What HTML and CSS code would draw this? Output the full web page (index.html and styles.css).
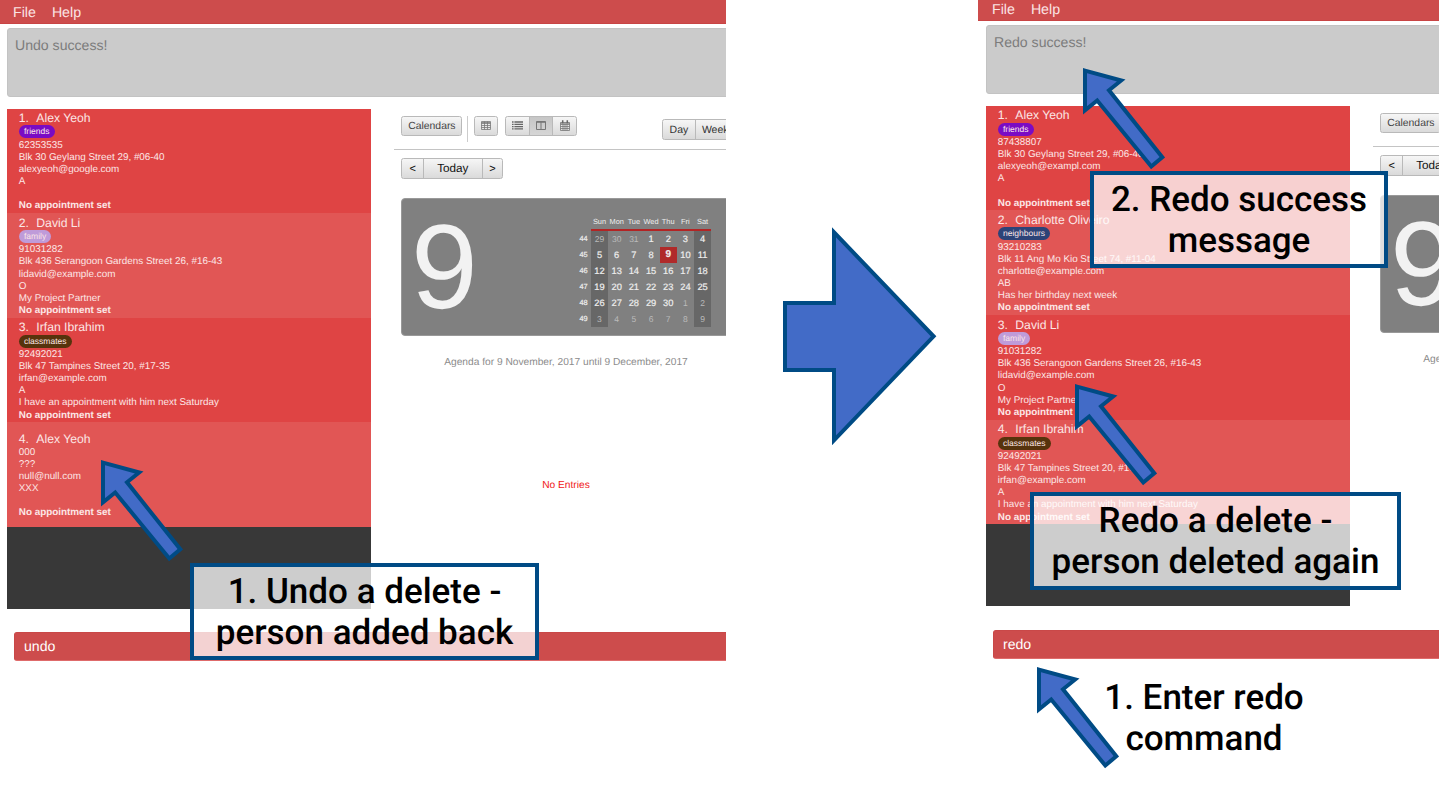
FILE: index.html
```
<!DOCTYPE html>
<html lang="en">
<head>
<meta charset="utf-8">
<title>Undo and redo</title>
<link rel="stylesheet" href="styles.css">
</head>
<body>
<svg class="defs" width="0" height="0" aria-hidden="true">
  <symbol id="pointer" viewBox="0 0 86 104"><path d="M2 2.6 38.2 12.5 26 22.3 79.3 89.3 68.3 98.5 14.2 32.5 2 42.3Z" fill="#426bc7" stroke="#004b85" stroke-width="4" stroke-miterlimit="10"/></symbol>
  <symbol id="i-grid" viewBox="0 0 10 9"><path d="M.5.5h9v8h-9zM.5 2.5h9M.5 4.5h9M.5 6.5h9M3.5.5v8M6.5.5v8M.5 1.5h9" fill="none" stroke="#777" stroke-width=".8"/></symbol>
  <symbol id="i-list" viewBox="0 0 11 9"><path d="M0 1h1.6M2.4 1H11M0 3.3h1.6M2.4 3.3H11M0 5.6h1.6M2.4 5.6H11M0 7.9h1.6M2.4 7.9H11" fill="none" stroke="#666" stroke-width="1.3"/></symbol>
  <symbol id="i-cols" viewBox="0 0 10 9"><path d="M.5.5h9v8h-9zM5 .5v8M.5 1.3h9" fill="none" stroke="#777" stroke-width="1"/></symbol>
  <symbol id="i-cal" viewBox="0 0 10 11"><path d="M.5 2.5h9v8h-9zM.5 4.5h9M.5 6.5h9M.5 8.5h9M3 4v6.500M5 4v6.500M7 4v6.500M.5 3.300h9" fill="none" stroke="#777" stroke-width=".8"/><path d="M2.700.3v3M7.300.3v3" stroke="#666" stroke-width="1.500"/></symbol>
</svg>
<main class="slide">
  <section class="pane pane-undo">
    <nav class="menu"><span>File</span><span>Help</span></nav>
    <div class="app">
      <div class="result">Undo success!</div>
      <div class="body">
        <div class="people">
          <article class="person"><h2><b>1.</b>Alex Yeoh</h2><span class="tag friends">friends</span><p>62353535</p><p>Blk 30 Geylang Street 29, #06-40</p><p>alexyeoh@google.com</p><p>A</p><p></p><p class="appt">No appointment set</p></article>
          <article class="person"><h2><b>2.</b>David Li</h2><span class="tag family">family</span><p>91031282</p><p>Blk 436 Serangoon Gardens Street 26, #16-43</p><p>lidavid@example.com</p><p>O</p><p>My Project Partner</p><p class="appt">No appointment set</p></article>
          <article class="person"><h2><b>3.</b>Irfan Ibrahim</h2><span class="tag classmates">classmates</span><p>92492021</p><p>Blk 47 Tampines Street 20, #17-35</p><p>irfan@example.com</p><p>A</p><p>I have an appointment with him next Saturday</p><p class="appt">No appointment set</p></article>
          <article class="person"><h2><b>4.</b>Alex Yeoh</h2><p>000</p><p>???</p><p>null@null.com</p><p>XXX</p><p></p><p class="appt">No appointment set</p></article>
        </div>
        <div class="calendar">
          <div class="toolbar">
            <span class="btn cals">Calendars</span><i class="sep"></i>
            <span class="btn icon"><svg width="10" height="9"><use href="#i-grid"/></svg></span>
            <div class="group views"><span class="icon"><svg width="11" height="9"><use href="#i-list"/></svg></span><span class="icon on"><svg width="10" height="9"><use href="#i-cols"/></svg></span><span class="icon"><svg width="10" height="11"><use href="#i-cal"/></svg></span></div>
            <div class="group range"><span>Day</span><span>Week</span></div>
          </div>
          <div class="group nav"><span>&lt;</span><span class="today">Today</span><span>&gt;</span></div>
          <div class="date">
            <div class="big">9</div>
            <div class="month">
              <div class="days head"><i></i><span>Sun</span><span>Mon</span><span>Tue</span><span>Wed</span><span>Thu</span><span>Fri</span><span>Sat</span></div>
              <div class="days grid">
                <i>44</i><span class="we out">29</span><span class="out">30</span><span class="out">31</span><span>1</span><span>2</span><span>3</span><span class="we">4</span>
                <i>45</i><span class="we">5</span><span>6</span><span>7</span><span>8</span><span class="now">9</span><span>10</span><span class="we">11</span>
                <i>46</i><span class="we">12</span><span>13</span><span>14</span><span>15</span><span>16</span><span>17</span><span class="we">18</span>
                <i>47</i><span class="we">19</span><span>20</span><span>21</span><span>22</span><span>23</span><span>24</span><span class="we">25</span>
                <i>48</i><span class="we">26</span><span>27</span><span>28</span><span>29</span><span>30</span><span class="out">1</span><span class="we out">2</span>
                <i>49</i><span class="we out">3</span><span class="out">4</span><span class="out">5</span><span class="out">6</span><span class="out">7</span><span class="out">8</span><span class="we out">9</span>
              </div>
            </div>
          </div>
          <p class="agenda">Agenda for 9 November, 2017 until 9 December, 2017</p>
          <p class="none">No Entries</p>
        </div>
      </div>
      <div class="command">undo</div>
    </div>
  </section>
  <svg class="then" width="156" height="220" viewBox="0 0 156 220"><path d="M4 77h49V6.300L152.600 110.300 53 214.300V144H4Z" fill="#426bc7" stroke="#004b85" stroke-width="4"/></svg>
  <section class="pane pane-redo">
    <nav class="menu"><span>File</span><span>Help</span></nav>
    <div class="app">
      <div class="result">Redo success!</div>
      <div class="body">
        <div class="people">
          <article class="person"><h2><b>1.</b>Alex Yeoh</h2><span class="tag friends">friends</span><p>87438807</p><p>Blk 30 Geylang Street 29, #06-40</p><p>alexyeoh@exampl.com</p><p>A</p><p></p><p class="appt">No appointment set</p></article>
          <article class="person"><h2><b>2.</b>Charlotte Oliveiro</h2><span class="tag neighbours">neighbours</span><p>93210283</p><p>Blk 11 Ang Mo Kio Street 74, #11-04</p><p>charlotte@example.com</p><p>AB</p><p>Has her birthday next week</p><p class="appt">No appointment set</p></article>
          <article class="person"><h2><b>3.</b>David Li</h2><span class="tag family">family</span><p>91031282</p><p>Blk 436 Serangoon Gardens Street 26, #16-43</p><p>lidavid@example.com</p><p>O</p><p>My Project Partner</p><p class="appt">No appointment set</p></article>
          <article class="person"><h2><b>4.</b>Irfan Ibrahim</h2><span class="tag classmates">classmates</span><p>92492021</p><p>Blk 47 Tampines Street 20, #17-35</p><p>irfan@example.com</p><p>A</p><p>I have an appointment with him next Saturday</p><p class="appt">No appointment set</p></article>
        </div>
        <div class="calendar">
          <div class="toolbar"><span class="btn cals">Calendars</span></div>
          <div class="group nav"><span>&lt;</span><span class="today">Today</span><span>&gt;</span></div>
          <div class="date"><div class="big">9</div></div>
          <p class="agenda">Agenda for 9 November, 2017 until 9 December, 2017</p>
        </div>
      </div>
      <div class="command">redo</div>
    </div>
  </section>

  <svg class="ptr ptr-undo" width="86" height="104"><use href="#pointer"/></svg>
  <svg class="ptr ptr-message" width="86" height="104"><use href="#pointer"/></svg>
  <svg class="ptr ptr-deleted" width="86" height="104"><use href="#pointer"/></svg>
  <svg class="ptr ptr-command" width="86" height="104"><use href="#pointer"/></svg>
  <div class="note note-undo">1. Undo a delete -<br>person added back</div>
  <div class="note note-message">2. Redo success<br>message</div>
  <div class="note note-deleted">Redo a delete -<br>person deleted again</div>
  <div class="note note-command">1. Enter redo<br>command</div>
</main>
</body>
</html>
```
FILE: styles.css
```
* { box-sizing: border-box; }
body { margin: 0; background: #fff; font-family: "Liberation Sans", Arial, sans-serif; text-rendering: geometricPrecision; }
h2, p { margin: 0; font-weight: normal; }
i { font-style: normal; }
.defs { position: absolute; }
.slide { position: relative; display: flex; width: 1439px; height: 809px; overflow: hidden; }
.pane { flex: none; height: 809px; overflow: hidden; }
.pane-undo { width: 726px; }
.pane-redo { width: 461px; margin-left: 41px; }
.then { flex: none; margin: 226px 0 0 55px; }

.menu { display: flex; gap: 16px; height: 24px; padding: 0 13px; background: #cd4c4c; border-bottom: 1px solid #c84444; color: #fbe3e3; font-size: 14.200px; line-height: 26px; }
.pane-redo .menu { height: 21.400px; padding-left: 14px; line-height: 21px; }
.app { width: 820px; padding: 4px 0 0 7px; }
.pane-redo .app { padding-left: 8px; }
.result { height: 68.500px; padding: 8px 7px; background: #cbcbcb; border: 1px solid #c3c3c3; border-radius: 3px; color: #7c7c7c; font-size: 14.100px; line-height: 16px; }
.body { display: flex; margin-top: 12px; height: 500px; }
.people { flex: none; width: 364px; background: #383838; }
.person { display: flex; flex-direction: column; align-items: flex-start; justify-content: center; height: 104.600px; padding: .8px 0 0 11.800px; background: #df4444; color: #fce6e6; font-size: 9.870px; line-height: 12.150px; }
.person:nth-child(even) { background: #e15655; }
.person h2 { font-size: 12.200px; line-height: 16px; height: 16px; }
.person b { display: inline-block; width: 17.500px; font-weight: normal; }
.person p { height: 12.150px; white-space: nowrap; }
.person .appt { font-weight: bold; }
.tag { height: 13px; margin: -.6px 0 1.300px; padding: 0 5.200px; border-radius: 7px; font-size: 8.500px; line-height: 13.500px; }
.friends { background: #7a0bc4; }
.family { background: #bf9bd9; }
.classmates { background: #56330c; }
.neighbours { background: #2c4378; }

.calendar { flex: none; width: 370px; margin-left: 23px; }
.toolbar { display: flex; height: 41.500px; padding: 7px 0 0 7.400px; border-bottom: 1px solid #c4c4c4; }
.toolbar > * { flex: none; }
.btn, .group { border: 1px solid #b9b9b9; border-radius: 2.500px; background: linear-gradient(#f6f6f6, #dadada); }
.btn { height: 20.500px; }
.cals { width: 61px; font-size: 10.400px; line-height: 20px; text-align: center; color: #444; }
.sep { width: 1px; height: 26px; margin: 0 6px 0 4.500px; background: #ccc; }
.icon { display: flex; align-items: center; justify-content: center; }
.btn.icon { width: 24px; height: 20px; }
.group { display: flex; color: #333; }
.group > span + span { border-left: 1px solid #b9b9b9; }
.views { width: 72px; height: 20px; margin-left: 7px; }
.views .icon { flex: 1; }
.views .on { background: linear-gradient(#c6c6c6, #d6d6d6); }
.range { margin: 3px 0 0 85px; width: 160px; height: 21px; font-size: 10.500px; line-height: 20px; }
.range span { width: 32px; text-align: center; }
.range span + span { width: 42px; text-align: left; padding-left: 6px; }
.nav { width: 102px; height: 21px; margin: 8px 0 0 7.400px; font-size: 11px; line-height: 20px; text-align: center; color: #111; }
.nav span { width: 21px; }
.nav .today { width: 59px; font-size: 11.700px; }
.date { display: flex; justify-content: space-between; width: 362px; height: 138px; margin: 19px 0 0 7.400px; border-radius: 4px; background: #808080; border: 1px solid #999; }
.big { margin: -1px 0 0 8.500px; color: #f2f2f2; font-size: 120px; line-height: 138px; }
.month { width: 135px; margin: 15px 51px 0 0; color: #eee; }
.days { display: grid; grid-template-columns: 14.500px repeat(7, 17.200px); text-align: center; }
.head { height: 17px; font-size: 7.400px; line-height: 15px; background: linear-gradient(#b32424, #b32424) 14.500px 15px / 120.400px 2px no-repeat; }
.grid { grid-auto-rows: 16px; font-size: 9.300px; line-height: 16px; -webkit-text-stroke: .2px; }
.grid i { font-size: 7.400px; text-align: left; padding-left: 3px; }
.grid .we { background: #676767; }
.grid .out { color: #bbb; font-size: 8.500px; -webkit-text-stroke: 0; }
.grid .now { background: #b02a2a; font-weight: bold; font-size: 10px; }
.agenda, .none { width: 344px; text-align: center; font-size: 10.200px; line-height: 12px; }
.agenda { margin-top: 20.500px; color: #8c8c8c; white-space: nowrap; }
.none { margin-top: 111px; color: #f01818; }
.command { height: 28.500px; margin: 23.500px 0 0 7px; padding-left: 9px; border: 1px solid #c94848; border-bottom-color: #df6b6b; border-radius: 3px; background: #cd4c4c; color: #fff; font-size: 14.100px; line-height: 27px; }
.pane-redo .command { margin-top: 24.200px; line-height: 27px; }

.ptr { position: absolute; }
.ptr-undo { left: 101px; top: 460px; }
.ptr-message { left: 1083px; top: 67.700px; }
.ptr-deleted { left: 1075px; top: 383.700px; }
.ptr-command { left: 1037px; top: 666.700px; }
.note { position: absolute; border: 4px solid #004b85; background: rgba(255, 255, 255, .75); color: #000; font: 500 35px/41px Roboto, sans-serif; text-align: center; white-space: nowrap; padding-top: 4px; }
.note-undo { left: 190px; top: 563px; width: 349px; height: 97px; }
.note-message { left: 1090px; top: 171px; width: 298px; height: 97px; }
.note-deleted { left: 1030px; top: 492px; width: 371px; height: 98px; }
.note-command { left: 1104px; top: 669px; width: 200px; border-color: transparent; background: none; display: flex; justify-content: center; }
```
